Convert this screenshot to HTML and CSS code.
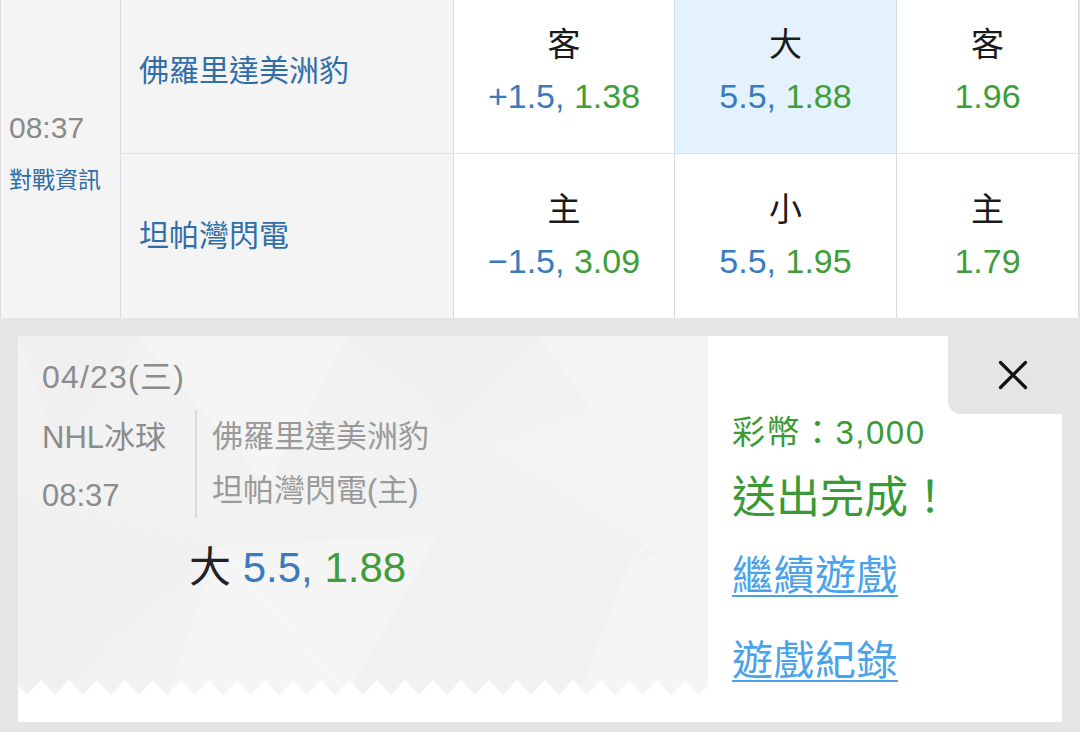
FILE: index.html
```html
<!DOCTYPE html>
<html lang="zh-Hant">
<head>
<meta charset="utf-8">
<title>投注單</title>
<link rel="stylesheet" href="styles.css">
</head>
<body>
<table class="odds">
  <colgroup>
    <col class="c-time"><col class="c-team"><col class="c-a"><col class="c-b"><col class="c-c">
  </colgroup>
  <tr class="r1">
    <td class="time" rowspan="2">
      <div class="clock">08:37</div>
      <div class="info">對戰資訊</div>
    </td>
    <td class="team">佛羅里達美洲豹</td>
    <td class="cell"><div class="side">客</div><div class="val"><span class="b">+1.5,</span> <span class="g">1.38</span></div></td>
    <td class="cell sel"><div class="side">大</div><div class="val"><span class="b">5.5,</span> <span class="g">1.88</span></div></td>
    <td class="cell"><div class="side">客</div><div class="val"><span class="g">1.96</span></div></td>
  </tr>
  <tr class="r2">
    <td class="team">坦帕灣閃電</td>
    <td class="cell"><div class="side">主</div><div class="val"><span class="b">&minus;1.5,</span> <span class="g">3.09</span></div></td>
    <td class="cell"><div class="side">小</div><div class="val"><span class="b">5.5,</span> <span class="g">1.95</span></div></td>
    <td class="cell"><div class="side">主</div><div class="val"><span class="g">1.79</span></div></td>
  </tr>
</table>

<div class="slip">
  <div class="panel">
    <div class="ticket">
      <svg class="decor" width="690" height="359" viewBox="0 0 690 359">
        <polygon points="0,0 120,0 40,120" fill="#eeeeee" opacity="0.5"/>
        <polygon points="120,0 330,0 250,150" fill="#f5f5f5" opacity="0.8"/>
        <polygon points="330,0 520,0 430,90" fill="#efefef" opacity="0.6"/>
        <polygon points="520,0 690,0 690,80 600,110" fill="#f5f5f5" opacity="0.9"/>
        <polygon points="470,110 690,30 690,250" fill="#f4f4f4" opacity="0.9"/>
        <polygon points="0,160 200,210 40,359 0,359" fill="#efefef" opacity="0.6"/>
        <polygon points="200,210 420,200 330,359 150,359" fill="#f5f5f5" opacity="0.8"/>
        <polygon points="420,200 610,230 560,359 330,359" fill="#efefef" opacity="0.5"/>
        <polygon points="610,230 690,200 690,359 560,359" fill="#f5f5f5" opacity="0.9"/>
        <line x1="200" y1="210" x2="330" y2="359" stroke="#f7f7f7" stroke-width="1.5"/>
        <line x1="610" y1="230" x2="690" y2="140" stroke="#f7f7f7" stroke-width="1.5"/>
      </svg>
      <div class="ticket-body">
        <div class="date">04/23(三)</div>
        <div class="match">
          <div class="meta">
            <div>NHL冰球</div>
            <div>08:37</div>
          </div>
          <div class="teams">
            <div>佛羅里達美洲豹</div>
            <div>坦帕灣閃電(主)</div>
          </div>
        </div>
        <div class="pick"><span class="k">大</span> <span class="b">5.5,</span> <span class="g">1.88</span></div>
      </div>
      <svg class="zigzag" width="690" height="15" viewBox="0 0 690 15">
        <defs>
          <pattern id="zz" x="9" y="0" width="28" height="15" patternUnits="userSpaceOnUse">
            <path d="M0 15L14 0L28 15Z" fill="#ffffff"/>
          </pattern>
        </defs>
        <rect width="690" height="15" fill="url(#zz)"/>
      </svg>
    </div>
    <div class="result">
      <div class="coins">彩幣：3,000</div>
      <div class="done">送出完成！</div>
      <a class="link first" href="#">繼續遊戲</a>
      <a class="link" href="#">遊戲紀錄</a>
    </div>
    <button class="close" type="button" aria-label="關閉">
      <svg width="30" height="30" viewBox="0 0 30 30"><path d="M2.5 2.5L27.5 27.5M27.5 2.5L2.5 27.5" stroke="#111" stroke-width="3.2" stroke-linecap="round" fill="none"/></svg>
    </button>
  </div>
</div>
</body>
</html>
```

FILE: styles.css
```css
* { box-sizing: border-box; }

html, body {
  margin: 0;
  padding: 0;
}

body {
  width: 1080px;
  height: 732px;
  overflow: hidden;
  background: #e5e5e5;
  font-family: "Liberation Sans", "Noto Sans CJK TC", sans-serif;
}

/* ---------- odds table ---------- */
.odds {
  border-collapse: collapse;
  table-layout: fixed;
  width: 1078px;
  background: #f4f4f4;
}

.c-time { width: 120px; }
.c-team { width: 333px; }
.c-a { width: 221px; }
.c-b { width: 222px; }
.c-c { width: 182px; }

.odds td {
  padding: 0;
  border-right: 1px solid #d4dde6;
  vertical-align: middle;
}

.r1 td { height: 153px; }
.r2 td { height: 165px; }

.r1 td.team, .r1 td.cell {
  border-bottom: 1px solid #dde2e7;
  padding-bottom: 11px;
}

.r1 td.team { padding-bottom: 17px; }
.r2 td.team { padding-bottom: 6px; }

.time {
  border-left: 1px solid #dcdcdc;
  padding-left: 8px !important;
  padding-bottom: 3px !important;
}

.clock {
  font-size: 30px;
  line-height: 44px;
  color: #8a8a8a;
}

.info {
  font-size: 23px;
  line-height: 60px;
  color: #2f6ea8;
  margin-top: 0;
}

.team {
  padding-left: 18px !important;
  font-size: 30px;
  color: #2f6ea8;
}

.cell {
  background: #ffffff;
  text-align: center;
}

.cell.sel { background: #e3f2fc; }

.side {
  font-size: 33px;
  line-height: 50px;
  color: #1a1a1a;
}

.val {
  font-size: 34px;
  line-height: 52px;
}

.b { color: #3a7bbd; }
.g { color: #3f9e3a; }

/* ---------- bet slip ---------- */
.slip {
  height: 414px;
  padding: 18px 18px 0 18px;
}

.panel {
  position: relative;
  display: flex;
  width: 1044px;
  height: 386px;
  background: #ffffff;
}

.ticket {
  position: relative;
  width: 690px;
  height: 359px;
  background: #f2f2f2;
  overflow: hidden;
}

.decor {
  position: absolute;
  left: 0;
  top: 0;
}

.zigzag {
  position: absolute;
  left: 0;
  bottom: 0;
  display: block;
}

.ticket-body {
  position: relative;
  padding: 23px 0 0 24px;
  color: #8c8c8c;
}

.date {
  font-size: 32px;
  line-height: 36px;
  letter-spacing: 1.2px;
}

.match {
  display: flex;
  align-items: flex-start;
  margin-top: 15px;
}

.meta {
  width: 153px;
  font-size: 31px;
  line-height: 58px;
  margin-top: -1px;
}

.teams {
  border-left: 2px solid #dadada;
  padding-left: 15px;
  height: 108px;
  font-size: 31px;
  line-height: 54px;
  color: #9a9a9a;
}

.pick {
  margin: 18px 0 0 147px;
  font-size: 42px;
  line-height: 50px;
}

.pick .k { color: #222222; }

.result {
  flex: 1;
  display: flex;
  flex-direction: column;
  align-items: flex-start;
  padding: 76px 0 0 24px;
}

.coins {
  font-size: 33px;
  line-height: 42px;
  letter-spacing: 1.5px;
  color: #3a9a35;
}

.done {
  margin-top: 15px;
  font-size: 44px;
  line-height: 58px;
  color: #3a9a35;
}

.link {
  font-size: 41px;
  line-height: 56px;
  letter-spacing: 0.5px;
  color: #4aa3ea;
  text-decoration: underline;
  text-decoration-thickness: 2px;
  text-underline-offset: 5px;
}

.link.first { margin-top: 21px; }
.link + .link { margin-top: 29px; }

.close {
  position: absolute;
  top: 0;
  right: 0;
  width: 114px;
  height: 78px;
  border: 0;
  padding: 0 0 0 50px;
  margin: 0;
  background: #e5e5e5;
  border-bottom-left-radius: 13px;
  display: flex;
  align-items: center;
  justify-content: flex-start;
  cursor: pointer;
}

.close svg { display: block; }
```
